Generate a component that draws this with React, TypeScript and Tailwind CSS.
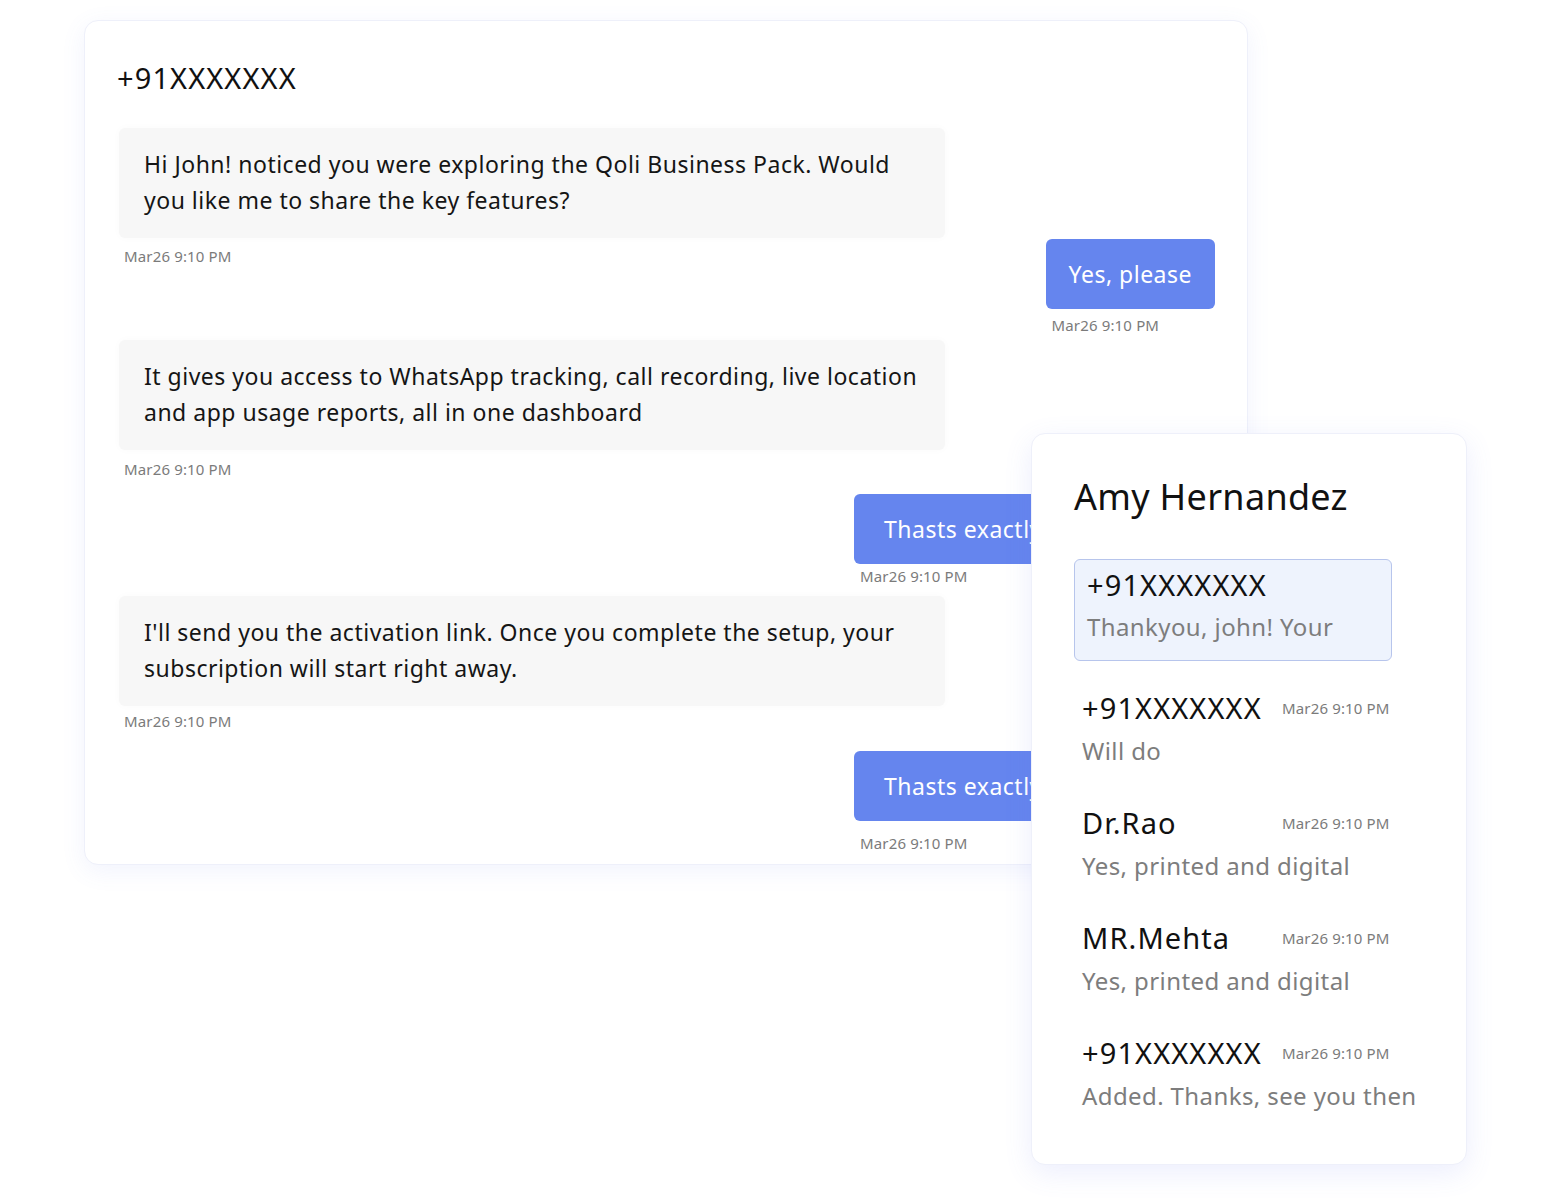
import React from "react";

type Msg =
  | { kind: "in"; text: string; gap: string; tsGap: string }
  | { kind: "out"; text: string; gap: string; tsGap: string; wide?: boolean };

const STAMP = "Mar26 9:10 PM";

const THREAD: Msg[] = [
  {
    kind: "in",
    text: "Hi John! noticed you were exploring the Qoli Business Pack. Would you like me to share the key features?",
    gap: "mt-[30px]",
    tsGap: "mt-[8px]",
  },
  { kind: "out", text: "Yes, please", gap: "-mt-[27px]", tsGap: "mt-[6px]" },
  {
    kind: "in",
    text: "It gives you access to WhatsApp tracking, call recording, live location and app usage reports, all in one dashboard",
    gap: "mt-[5px]",
    tsGap: "mt-[9px]",
  },
  { kind: "out", text: "Thasts exactly", gap: "mt-[15px]", tsGap: "mt-[2px]", wide: true },
  {
    kind: "in",
    text: "I'll send you the activation link. Once you complete the setup, your subscription will start right away.",
    gap: "mt-[10px]",
    tsGap: "mt-[5px]",
  },
  { kind: "out", text: "Thasts exactly", gap: "mt-[20px]", tsGap: "mt-[12px]", wide: true },
];

const CONTACTS = [
  { name: "+91XXXXXXX", preview: "Will do" },
  { name: "Dr.Rao", preview: "Yes, printed and digital" },
  { name: "MR.Mehta", preview: "Yes, printed and digital" },
  { name: "+91XXXXXXX", preview: "Added. Thanks, see you then" },
];

function Stamp({ className }: { className?: string }) {
  return (
    <div className={`text-[15px] leading-[20px] tracking-[0.15px] text-[#7b7b7b] ${className ?? ""}`}>
      {STAMP}
    </div>
  );
}

function Thread() {
  return (
    <section className="ml-[84px] mt-[20px] flex w-[1164px] flex-col rounded-[14px] border border-[#eef0fa] bg-white pb-[11px] pl-[32px] pr-[32px] pt-[37px] shadow-[0_6px_24px_rgba(96,118,235,0.09)]">
      <h2 className="text-[29px] leading-[40px] tracking-[1.1px] text-[#111]">+91XXXXXXX</h2>
      {THREAD.map((m, i) =>
        m.kind === "in" ? (
          <div key={i} className={`flex flex-col items-start ${m.gap}`}>
            <div className="ml-[2px] w-[826px] rounded-[6px] bg-[#f7f7f7] px-[25px] pb-[20px] pt-[18px] text-[23px] leading-[36px] tracking-[0.5px] text-[#151515] shadow-[0_0_8px_rgba(0,0,0,0.025)]">
              {m.text}
            </div>
            <Stamp className={`ml-[7px] ${m.tsGap}`} />
          </div>
        ) : (
          <div key={i} className={`flex flex-col items-start self-end ${m.gap}`}>
            <div
              className={`flex h-[70px] items-center overflow-hidden whitespace-nowrap rounded-[6px] bg-[#6585ee] text-[23px] tracking-[0.5px] text-white ${
                m.wide ? "w-[361px] pl-[30px]" : "px-[23px]"
              }`}
            >
              {m.text}
            </div>
            <Stamp className={`ml-[6px] ${m.tsGap}`} />
          </div>
        ),
      )}
    </section>
  );
}

function Contacts() {
  return (
    <aside className="absolute left-[1031px] top-[433px] h-[732px] w-[436px] rounded-[14px] border border-[#eef0fa] bg-white pl-[42px] pt-[40px] shadow-[0_8px_28px_rgba(96,118,235,0.12)]">
      <h3 className="text-[36px] leading-[46px] tracking-[0.3px] text-[#111]">Amy Hernandez</h3>
      <div className="mt-[39px] w-[318px] rounded-[6px] border border-[#b7c5ec] bg-[#eef3fd] pb-[18px] pl-[12px] pt-[7px]">
        <div className="text-[29px] leading-[36px] tracking-[1.1px] text-[#111]">+91XXXXXXX</div>
        <div className="mt-[9px] text-[24px] leading-[30px] tracking-[0.4px] text-[#7d7d7d]">Thankyou, john! Your</div>
      </div>
      <ul className="ml-[8px] mt-[29px] flex flex-col gap-[39px]">
        {CONTACTS.map((c, i) => (
          <li key={i} className="flex flex-col">
            <div className="flex items-center">
              <span className="w-[200px] text-[29px] leading-[36px] tracking-[1.1px] text-[#111]">{c.name}</span>
              <span className="text-[15px] leading-[20px] tracking-[0.15px] text-[#7b7b7b]">{STAMP}</span>
            </div>
            <div className="mt-[10px] text-[24px] leading-[30px] tracking-[0.4px] text-[#7d7d7d]">{c.preview}</div>
          </li>
        ))}
      </ul>
    </aside>
  );
}

export default function App() {
  return (
    <div
      className="relative h-[1200px] w-[1550px] overflow-hidden bg-white"
      style={{ fontFamily: '"Noto Sans", "Open Sans", sans-serif' }}
    >
      <Thread />
      <Contacts />
    </div>
  );
}
